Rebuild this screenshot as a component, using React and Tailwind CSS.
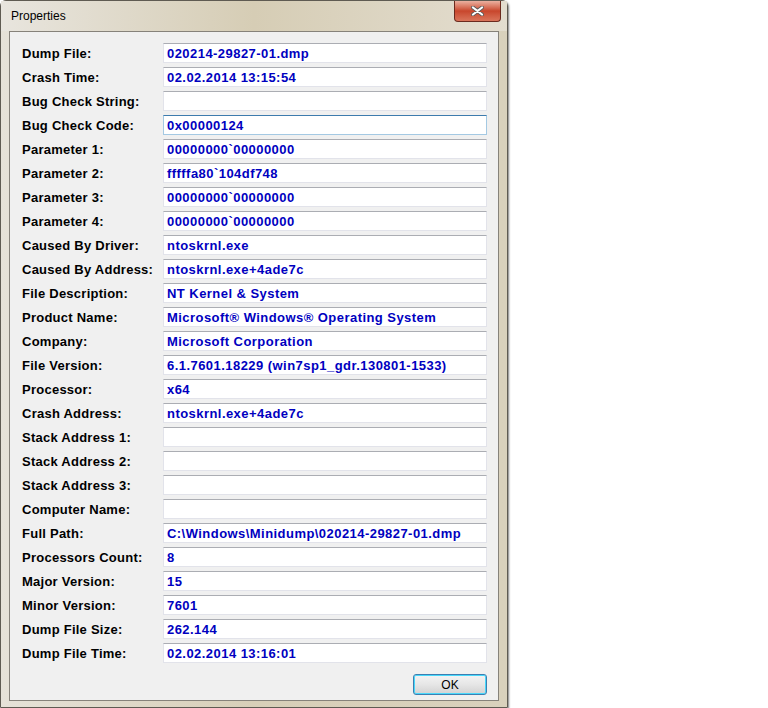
import React from 'react';

const rows = [
    ['Dump File:', '020214-29827-01.dmp'],
    ['Crash Time:', '02.02.2014 13:15:54'],
    ['Bug Check String:', ''],
    ['Bug Check Code:', '0x00000124', true],
    ['Parameter 1:', '00000000`00000000'],
    ['Parameter 2:', 'fffffa80`104df748'],
    ['Parameter 3:', '00000000`00000000'],
    ['Parameter 4:', '00000000`00000000'],
    ['Caused By Driver:', 'ntoskrnl.exe'],
    ['Caused By Address:', 'ntoskrnl.exe+4ade7c'],
    ['File Description:', 'NT Kernel & System'],
    ['Product Name:', 'Microsoft® Windows® Operating System'],
    ['Company:', 'Microsoft Corporation'],
    ['File Version:', '6.1.7601.18229 (win7sp1_gdr.130801-1533)'],
    ['Processor:', 'x64'],
    ['Crash Address:', 'ntoskrnl.exe+4ade7c'],
    ['Stack Address 1:', ''],
    ['Stack Address 2:', ''],
    ['Stack Address 3:', ''],
    ['Computer Name:', ''],
    ['Full Path:', 'C:\\Windows\\Minidump\\020214-29827-01.dmp'],
    ['Processors Count:', '8'],
    ['Major Version:', '15'],
    ['Minor Version:', '7601'],
    ['Dump File Size:', '262.144'],
    ['Dump File Time:', '02.02.2014 13:16:01'],
];

function CloseButton() {
    return (
        <div className="w-[47px] h-[21px] rounded-b-[4px] border border-t-0 border-[#6b2a1e] bg-gradient-to-b from-[#eab0a0] via-[#c8462c] to-[#d9745a] flex items-center justify-center">
            <svg width="13" height="10" viewBox="0 0 13 10">
                <path d="M2 1.5 L11 8.5 M11 1.5 L2 8.5" stroke="#5a5a5a" strokeWidth="3.8" strokeLinecap="round" />
                <path d="M2 1.5 L11 8.5 M11 1.5 L2 8.5" stroke="#ffffff" strokeWidth="2.2" strokeLinecap="round" />
            </svg>
        </div>
    );
}

function Field({ value, focused }) {
    return (
        <div
            className={`w-[324px] h-[20px] bg-white border flex items-center pl-[3px] overflow-hidden whitespace-nowrap ${
                focused
                    ? 'border-[#a4c9e3] border-t-[#3d7bad]'
                    : 'border-[#e2e3ea] border-t-[#abadb3]'
            }`}
        >
            <span className="text-[13px] font-bold text-[#0000c0] tracking-[0.45px] leading-none">{value}</span>
        </div>
    );
}

export default function App() {
    return (
        <div className="w-[768px] h-[708px] bg-white flex font-['Liberation_Sans',Arial,sans-serif]">
            <div className="w-[508px] h-[708px] flex flex-col rounded-t-[6px] border border-[#5f5b52] bg-gradient-to-r from-[#e6e2d8] via-[#d8cfb8] to-[#d9d1bc] shadow-[1px_1px_2px_rgba(0,0,0,0.5)]">
                <div className="h-[30px] flex items-start justify-between pl-[10px] pr-[6px] bg-gradient-to-r from-[#e8e5de] via-[#d6cdb5] to-[#e3ddcf]">
                    <span className="text-[12px] text-black mt-[9px] leading-none">Properties</span>
                    <CloseButton />
                </div>
                <div className="flex-1 mx-[8px] mb-[6px] border border-[#86827a] bg-[#f0f0f0] flex flex-col pt-[11px] pl-[12px] pr-[11px]">
                    <div className="flex flex-col gap-[4px]">
                        {rows.map(([label, value, focused]) => (
                            <div key={label} className="flex items-center h-[20px]">
                                <span className="w-[141px] text-[13px] font-bold text-black tracking-[0.25px] leading-none">{label}</span>
                                <Field value={value} focused={focused} />
                            </div>
                        ))}
                    </div>
                    <div className="flex justify-end mt-[11px]">
                        <button className="w-[74px] h-[21px] rounded-[3px] border border-[#3c7fb1] shadow-[inset_0_0_0_1px_#48d8fb] bg-gradient-to-b from-[#f4f4f4] via-[#e6e6e6] to-[#d2d2d2] text-[12px] text-black leading-none">
                            OK
                        </button>
                    </div>
                </div>
            </div>
        </div>
    );
}
